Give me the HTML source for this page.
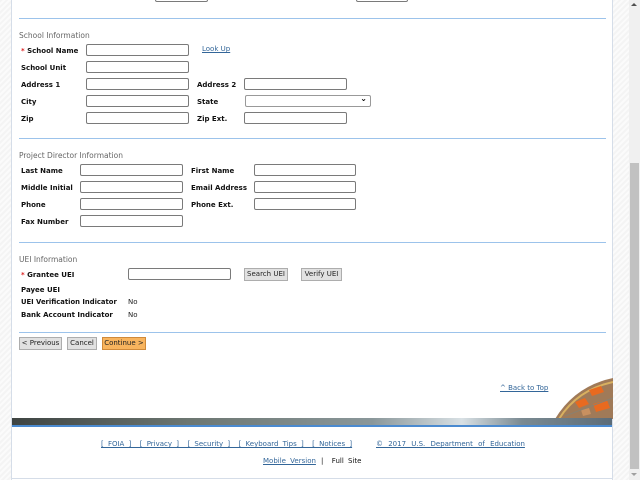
<!DOCTYPE html>
<html><head><meta charset="utf-8"><style>
*{margin:0;padding:0;box-sizing:border-box}
body{width:640px;height:480px;overflow:hidden;position:relative;background:#fff;font-family:"DejaVu Sans","Liberation Sans",sans-serif}
.hatch{position:absolute;top:0;height:480px;background:repeating-linear-gradient(135deg,#f4f4f4 0 2px,#fbfbfb 2px 4px)}
.a{position:absolute}
.l{position:absolute;font-size:7px;font-weight:bold;color:#111;line-height:10px;white-space:nowrap}
.t{position:absolute;font-size:7.5px;color:#666;line-height:10px;white-space:nowrap}
.i{position:absolute;height:12px;border:1px solid #7a7a7a;border-radius:2px;background:#fff}
.hr{position:absolute;left:19px;width:587px;height:1px;background:#9cc3eb}
.b{position:absolute;height:13px;font-size:7px;line-height:11px;text-align:center;background:#e1e1e1;border:1px solid #adadad;color:#222;white-space:nowrap;overflow:hidden}
.lnk{position:absolute;font-size:7px;color:#336699;text-decoration:underline;white-space:nowrap;line-height:10px}
.s{color:#d22;font-weight:bold}
</style></head><body>
<div class="hatch" style="left:0;width:11px"></div>
<div class="hatch" style="left:613px;width:16px"></div>
<div class="a" style="left:11px;top:0;width:1px;height:480px;background:#d5dde8"></div>
<div class="a" style="left:612px;top:0;width:1px;height:480px;background:#d5dde8"></div>
<div class="a" style="left:629px;top:0;width:11px;height:480px;background:#f0f0f0"></div>
<div class="a" style="left:630px;top:163px;width:9px;height:306px;background:#c1c1c1"></div>
<div class="a" style="left:631px;top:3px;width:0;height:0;border-left:3px solid transparent;border-right:3px solid transparent;border-bottom:3px solid #505050"></div>
<div class="a" style="left:631px;top:473px;width:0;height:0;border-left:3px solid transparent;border-right:3px solid transparent;border-top:3px solid #a0a0a0"></div>

<div class="i" style="left:155px;top:-10px;width:53px;height:12px"></div>
<div class="i" style="left:356px;top:-10px;width:52px;height:12px"></div>
<div class="hr" style="top:18px"></div>

<div class="t" style="left:19px;top:31px">School Information</div>
<div class="l" style="left:21px;top:46px"><span class="s">*</span> School Name</div>
<div class="i" style="left:86px;top:44px;width:103px"></div>
<div class="lnk" style="left:202px;top:44px">Look Up</div>
<div class="l" style="left:21px;top:63px">School Unit</div>
<div class="i" style="left:86px;top:61px;width:103px"></div>
<div class="l" style="left:21px;top:80px">Address 1</div>
<div class="i" style="left:86px;top:78px;width:103px"></div>
<div class="l" style="left:197px;top:80px">Address 2</div>
<div class="i" style="left:244px;top:78px;width:103px"></div>
<div class="l" style="left:21px;top:97px">City</div>
<div class="i" style="left:86px;top:95px;width:103px"></div>
<div class="l" style="left:197px;top:97px">State</div>
<div class="i" style="left:245px;top:95px;width:126px;height:12px;border-color:#999"><span style="position:absolute;right:3px;top:-2px;font-size:8px;font-weight:bold">&#8964;</span></div>
<div class="l" style="left:21px;top:114px">Zip</div>
<div class="i" style="left:86px;top:112px;width:103px"></div>
<div class="l" style="left:197px;top:114px">Zip Ext.</div>
<div class="i" style="left:244px;top:112px;width:103px"></div>

<div class="hr" style="top:138px"></div>
<div class="t" style="left:19px;top:151px">Project Director Information</div>
<div class="l" style="left:21px;top:166px">Last Name</div>
<div class="i" style="left:80px;top:164px;width:103px"></div>
<div class="l" style="left:191px;top:166px">First Name</div>
<div class="i" style="left:254px;top:164px;width:102px"></div>
<div class="l" style="left:21px;top:183px">Middle Initial</div>
<div class="i" style="left:80px;top:181px;width:103px"></div>
<div class="l" style="left:191px;top:183px">Email Address</div>
<div class="i" style="left:254px;top:181px;width:102px"></div>
<div class="l" style="left:21px;top:200px">Phone</div>
<div class="i" style="left:80px;top:198px;width:103px"></div>
<div class="l" style="left:191px;top:200px">Phone Ext.</div>
<div class="i" style="left:254px;top:198px;width:102px"></div>
<div class="l" style="left:21px;top:217px">Fax Number</div>
<div class="i" style="left:80px;top:215px;width:103px"></div>

<div class="hr" style="top:242px"></div>
<div class="t" style="left:19px;top:255px">UEI Information</div>
<div class="l" style="left:21px;top:270px"><span class="s">*</span> Grantee UEI</div>
<div class="i" style="left:128px;top:268px;width:103px"></div>
<div class="b" style="left:244px;top:268px;width:44px">Search UEI</div>
<div class="b" style="left:301px;top:268px;width:41px">Verify UEI</div>
<div class="l" style="left:21px;top:285px">Payee UEI</div>
<div class="l" style="left:21px;top:297px;font-size:6.8px">UEI Verification Indicator</div>
<div class="t" style="left:128px;top:297px;color:#222;font-size:7px">No</div>
<div class="l" style="left:21px;top:310px">Bank Account Indicator</div>
<div class="t" style="left:128px;top:310px;color:#222;font-size:7px">No</div>

<div class="hr" style="top:332px"></div>
<div class="b" style="left:19px;top:337px;width:43px">&lt; Previous</div>
<div class="b" style="left:67px;top:337px;width:30px">Cancel</div>
<div class="b" style="left:102px;top:337px;width:44px;background:#f8b45e;border-color:#d08a3a">Continue &gt;</div>

<div class="lnk" style="left:500px;top:383px">^ Back to Top</div>
<svg class="a" style="left:555px;top:378px" width="58" height="41"><path d="M0 41 Q20 8 58 0 L58 41 Z" fill="#a07a58"/><path d="M4 41 Q22 12 58 4" stroke="#d8b060" stroke-width="2" fill="none"/><path d="M20 24 l10 -4 l4 6 l-10 4 Z" fill="#e86a20"/><path d="M34 12 l12 -4 l3 6 l-12 4 Z" fill="#e86a20"/><path d="M38 26 l14 -4 l3 8 l-14 4 Z" fill="#e86a20"/><path d="M26 32 l8 -2 l2 6 l-8 2 Z" fill="#c89060"/><path d="M10 38 L58 20" stroke="#8a8070" stroke-width="1"/></svg>
<div class="a" style="left:12px;top:418px;width:600px;height:7px;background:linear-gradient(90deg,#3e4442,#6d7772 30%,#8a979a 60%,#d8e0e4 75%,#7a8a92 85%,#5c6c78)"></div>
<div class="a" style="left:12px;top:425px;width:600px;height:2px;background:#4a8ad0"></div>

<div class="lnk" style="left:101px;top:439px;font-size:7px;word-spacing:2px">[ FOIA ] &nbsp;[ Privacy ] &nbsp;[ Security ] &nbsp;[ Keyboard Tips ] &nbsp;[ Notices ]</div>
<div class="lnk" style="left:376px;top:439px;word-spacing:3px">© 2017 U.S. Department of Education</div>
<div class="lnk" style="left:263px;top:456px;word-spacing:2px">Mobile Version</div>
<div class="a" style="left:321px;top:456px;font-size:7px;line-height:10px;color:#111;white-space:nowrap;word-spacing:2px">| &nbsp;Full Site</div>
<div class="a" style="left:12px;top:478px;width:600px;height:1px;background:#d5dde8"></div>
</body></html>
